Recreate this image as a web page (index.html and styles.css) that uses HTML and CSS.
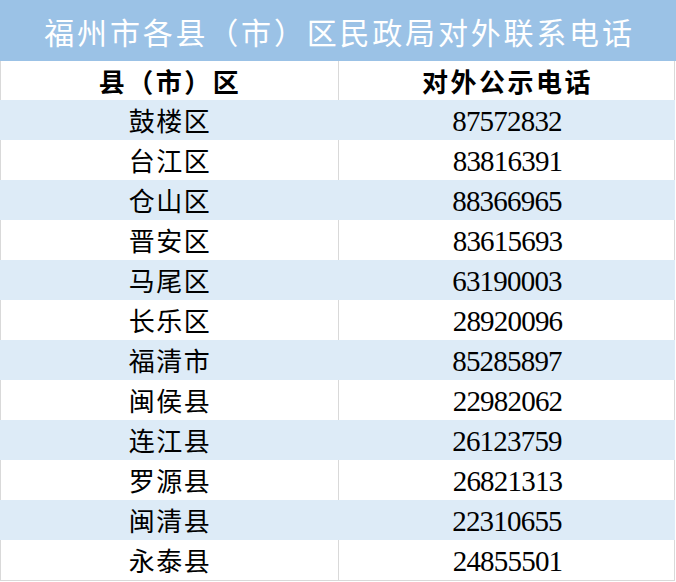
FILE: index.html
```html
<!DOCTYPE html>
<html lang="zh-CN">
<head>
<meta charset="utf-8">
<link rel="stylesheet" href="styles.css">
</head>
<body>
<div class="sheet">
  <div class="title">福州市各县（市）区民政局对外联系电话</div>
  <div class="row head">
    <div class="cell name">县（市）区</div>
    <div class="cell phone cjk">对外公示电话</div>
  </div>
  <div class="row blue"><div class="cell name">鼓楼区</div><div class="cell phone">87572832</div></div>
  <div class="row"><div class="cell name">台江区</div><div class="cell phone">83816391</div></div>
  <div class="row blue"><div class="cell name">仓山区</div><div class="cell phone">88366965</div></div>
  <div class="row"><div class="cell name">晋安区</div><div class="cell phone">83615693</div></div>
  <div class="row blue"><div class="cell name">马尾区</div><div class="cell phone">63190003</div></div>
  <div class="row"><div class="cell name">长乐区</div><div class="cell phone">28920096</div></div>
  <div class="row blue"><div class="cell name">福清市</div><div class="cell phone">85285897</div></div>
  <div class="row"><div class="cell name">闽侯县</div><div class="cell phone">22982062</div></div>
  <div class="row blue"><div class="cell name">连江县</div><div class="cell phone">26123759</div></div>
  <div class="row"><div class="cell name">罗源县</div><div class="cell phone">26821313</div></div>
  <div class="row blue"><div class="cell name">闽清县</div><div class="cell phone">22310655</div></div>
  <div class="row last"><div class="cell name">永泰县</div><div class="cell phone">24855501</div></div>
</div>
</body>
</html>
```

FILE: styles.css
```css
html, body {
  margin: 0;
  padding: 0;
  background: #ffffff;
}
.sheet {
  width: 676px;
  display: flex;
  flex-direction: column;
  font-family: "Noto Sans CJK SC", sans-serif;
  color: #000000;
}
.title {
  height: 61px;
  background: #9bc2e6;
  color: #ffffff;
  font-size: 30px;
  letter-spacing: 2.8px;
  padding-left: 3px;
  display: flex;
  align-items: center;
  justify-content: center;
  line-height: 1;
}
.row {
  height: 40px;
  width: 675px;
  display: grid;
  grid-template-columns: 337px 338px;
  box-sizing: border-box;
  border-left: 1px solid #d9d9d9;
  border-right: 1px solid #d9d9d9;
}
.row.head {
  height: 39px;
}
.row.blue {
  background: #ddebf7;
  border-color: #ddebf7;
}
.row.last {
  height: 41px;
  border-bottom: 1px solid #d9d9d9;
}
.cell {
  display: flex;
  align-items: center;
  justify-content: center;
  line-height: 1;
}
.cell.name {
  font-size: 26px;
  letter-spacing: 1.5px;
  padding-left: 1px;
}
.row:not(.blue) .cell.phone {
  border-left: 1px solid #d9d9d9;
}
.cell.phone {
  font-family: "Liberation Serif", serif;
  font-size: 29px;
  letter-spacing: -0.8px;
  padding-top: 2px;
}
.row.head .cell {
  font-weight: bold;
  font-size: 26px;
  letter-spacing: 2.5px;
  padding-top: 0;
}
.row.head .cell.cjk {
  font-family: "Noto Sans CJK SC", sans-serif;
}
```
